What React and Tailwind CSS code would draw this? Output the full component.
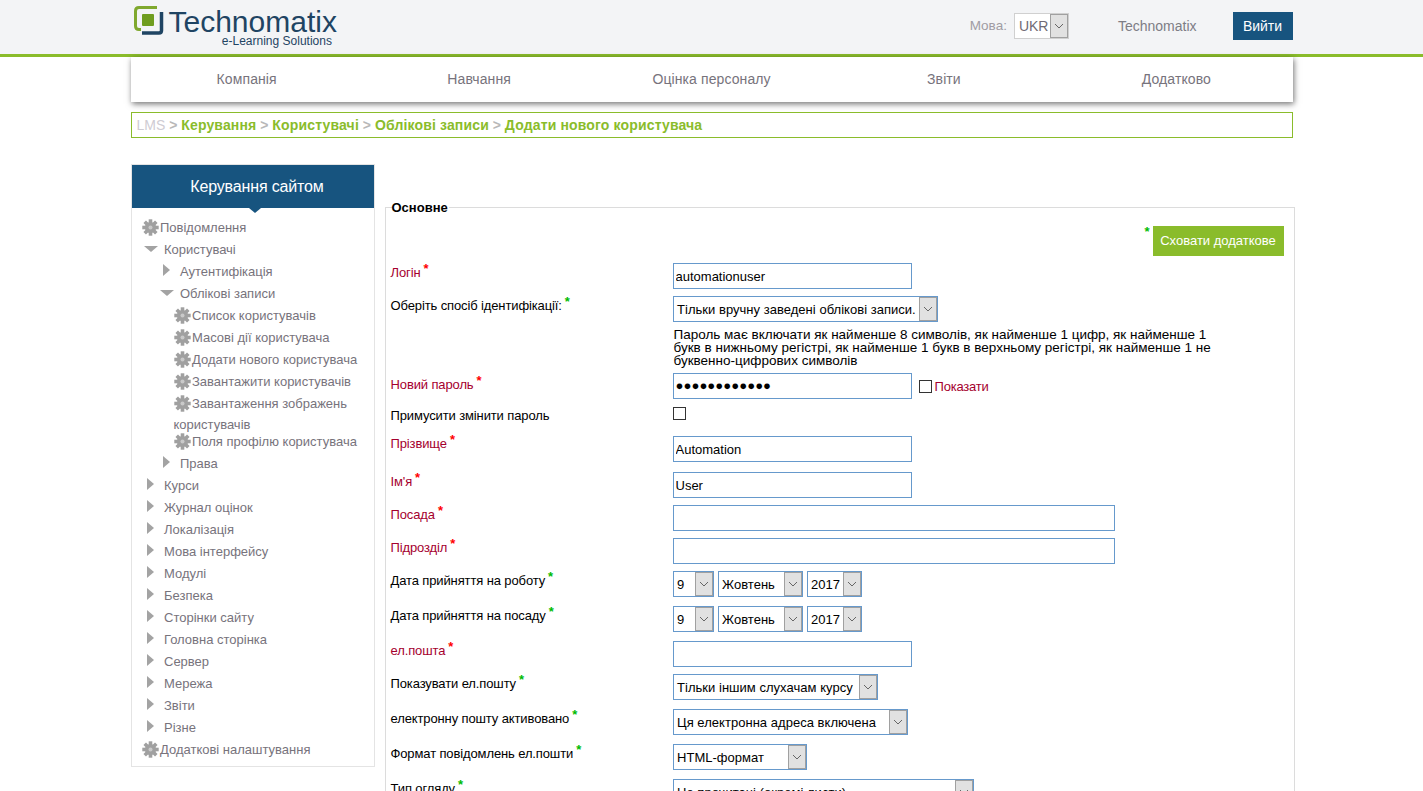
const nav = ["Компанія", "Навчання", "Оцінка персоналу", "Звіти", "Додатково"];

const tree = [
  { t: "Повідомлення", kind: "gear", pl: "pl-[10px]" },
  { t: "Користувачі", kind: "open", pl: "pl-[12px]" },
  { t: "Аутентифікація", kind: "closed", pl: "pl-[29px]" },
  { t: "Облікові записи", kind: "open", pl: "pl-[28px]" },
  { t: "Список користувачів", kind: "gear", pl: "pl-[42px]" },
  { t: "Масові дії користувача", kind: "gear", pl: "pl-[42px]" },
  { t: "Додати нового користувача", kind: "gear", pl: "pl-[42px]" },
  { t: "Завантажити користувачів", kind: "gear", pl: "pl-[42px]" },
  { t: "Завантаження зображень користувачів", kind: "gear", pl: "pl-[42px]", wrap: true },
  { t: "Поля профілю користувача", kind: "gear", pl: "pl-[42px]" },
  { t: "Права", kind: "closed", pl: "pl-[29px]" },
  { t: "Курси", kind: "closed", pl: "pl-[13px]" },
  { t: "Журнал оцінок", kind: "closed", pl: "pl-[13px]" },
  { t: "Локалізація", kind: "closed", pl: "pl-[13px]" },
  { t: "Мова інтерфейсу", kind: "closed", pl: "pl-[13px]" },
  { t: "Модулі", kind: "closed", pl: "pl-[13px]" },
  { t: "Безпека", kind: "closed", pl: "pl-[13px]" },
  { t: "Сторінки сайту", kind: "closed", pl: "pl-[13px]" },
  { t: "Головна сторінка", kind: "closed", pl: "pl-[13px]" },
  { t: "Сервер", kind: "closed", pl: "pl-[13px]" },
  { t: "Мережа", kind: "closed", pl: "pl-[13px]" },
  { t: "Звіти", kind: "closed", pl: "pl-[13px]" },
  { t: "Різне", kind: "closed", pl: "pl-[13px]" },
  { t: "Додаткові налаштування", kind: "gear", pl: "pl-[10px]" },
];

function Logo() {
  return (
    <svg width="30" height="30" viewBox="0 0 30 30" className="shrink-0">
      <path d="M23 2.5H5Q1.5 2.5 1.5 6V21Q1.5 24.5 5 24.5H7" fill="none" stroke="#7fa82e" strokeWidth="3" />
      <path d="M27.5 7V25.5Q27.5 28 25 28H8" fill="none" stroke="#1f4463" strokeWidth="3.5" />
      <rect x="8" y="9" width="12" height="12" rx="1" fill="#6f9d1f" />
    </svg>
  );
}

function Gear() {
  const teeth = [0, 45, 90, 135];
  return (
    <svg width="17" height="17" viewBox="0 0 17 17" className="mr-[1.5px] inline-block align-[-4px]">
      {teeth.map((a) => (
        <rect key={a} x="6.7" y="0.3" width="3.6" height="16.4" fill="#a0a0a0" transform={`rotate(${a} 8.5 8.5)`} />
      ))}
      <circle cx="8.5" cy="8.5" r="5.6" fill="#a0a0a0" />
      <circle cx="8.5" cy="8.5" r="2" fill="#c9c9c9" />
    </svg>
  );
}

function Chevron() {
  return (
    <svg width="10" height="6" viewBox="0 0 10 6">
      <path d="M1 1l4 4 4-4" fill="none" stroke="#666" strokeWidth="1" />
    </svg>
  );
}

function Select({ value, w }) {
  return (
    <div className={`flex h-[26px] ${w} items-stretch border border-[#6699cc] bg-white`}>
      <span className="min-w-0 flex-1 overflow-hidden whitespace-nowrap pl-[3.5px] text-[13px] leading-[25px] tracking-[0.03px] text-black">{value}</span>
      <span className="flex w-[18px] shrink-0 items-center justify-center border border-[#a0a0a0] bg-[#e1e1e1]">
        <Chevron />
      </span>
    </div>
  );
}

function TextBox({ value = "", w = "w-[239px]" }) {
  return (
    <input
      readOnly
      value={value}
      className={`block h-[26px] ${w} border border-[#6699cc] bg-white px-[2px] text-[13px] text-black outline-none`}
    />
  );
}

function Row({ label, star = "red", mt, labelClass = "", children }) {
  return (
    <div className={`flex ${mt}`}>
      <div className={`w-[287px] shrink-0 pl-[5px] text-[13px] leading-[20px] tracking-[-0.12px] ${labelClass}`}>
        <span className={star === "red" ? "text-[#a5002e]" : "text-black"}>{label}</span>
        <span className={`relative -top-[4px] ml-[3px] text-[13px] font-bold ${star === "red" ? "text-[#ff0000]" : "text-[#00bb00]"}`}>*</span>
      </div>
      <div className="flex gap-[4px]">{children}</div>
    </div>
  );
}

function DateRow({ label, mt }) {
  return (
    <Row label={label} star="green" mt={mt}>
      <Select value="9" w="w-[41px]" />
      <Select value="Жовтень" w="w-[85px]" />
      <Select value="2017" w="w-[55px]" />
    </Row>
  );
}

export default function App() {
  return (
    <div className="h-[791px] overflow-hidden bg-white font-['Liberation_Sans',Arial,sans-serif]">
      <header className="h-[57px] border-b-[3px] border-[#8abc2b] bg-[#f3f4f6]">
        <div className="mx-auto flex w-[1162px] items-start justify-between pl-[3px]">
          <div className="flex pt-[5px]">
            <Logo />
            <div className="ml-[5px] flex flex-col pt-[2px]">
              <span className="text-[30px] leading-[29px] text-[#1f4463]">Technomatix</span>
              <span className="self-end pr-[5px] text-[12px] leading-[10px] text-[#1f4463]">e-Learning Solutions</span>
            </div>
          </div>
          <div className="flex items-center pt-[12px]">
            <span className="text-[13.5px] text-[#a09ca4]">Мова:</span>
            <div className="ml-[7px] flex h-[26px] w-[55px] border border-[#d0d0d0] bg-white">
              <span className="flex-1 pl-[4px] text-[14px] leading-[24px] text-[#6f6a75]">UKR</span>
              <span className="flex w-[18px] items-center justify-center border border-[#a0a0a0] bg-[#e1e1e1]">
                <Chevron />
              </span>
            </div>
            <span className="ml-[49px] text-[14px] text-[#7d7d85]">Technomatix</span>
            <button className="ml-[36px] h-[28px] w-[60px] bg-[#17547f] text-[14px] text-white">Вийти</button>
          </div>
        </div>
      </header>

      <div className="mx-auto w-[1162px]">
        <nav className="flex h-[45px] items-center bg-white shadow-[1px_2px_6px_rgba(0,0,0,0.55)]">
          {nav.map((n) => (
            <div key={n} className="flex-1 text-center text-[14px] tracking-[0.1px] text-[#77737c]">
              {n}
            </div>
          ))}
        </nav>

        <div className="mt-[10px] h-[26px] border border-[#8abc2b] pl-[5px] text-[14px] leading-[24px]">
          <span className="text-[#cfccd3]">LMS</span>
          {["Керування", "Користувачі", "Облікові записи", "Додати нового користувача"].map((c) => (
            <span key={c}>
              <span className="font-bold text-[#b8b8b8]"> &gt; </span>
              <span className="font-bold tracking-[0.15px] text-[#8abc2b]">{c}</span>
            </span>
          ))}
        </div>

        <div className="mt-[26px] flex items-start">
          <aside className="w-[244px] shrink-0 border border-[#e4e4e4]">
            <div className="relative h-[43px] bg-[#17547f] pl-[9px] text-center text-[16px] leading-[43px] tracking-[-0.15px] text-white">
              Керування сайтом
              <span className="absolute left-[123px] top-full h-0 w-0 -translate-x-1/2 border-x-[6px] border-t-[5px] border-x-transparent border-t-[#17547f]" />
            </div>
            <ul className="pb-[5px] pt-[9px] text-[13px] leading-[22px] text-[#77737c]">
              {tree.map((i) => (
                <li key={i.t + i.pl} className={`${i.pl} ${i.wrap ? "h-[38px] pr-[10px] leading-[21px]" : ""}`}>
                  {i.kind === "gear" && <Gear />}
                  {i.kind === "open" && (
                    <span className="mr-[6.5px] inline-block h-0 w-0 align-[2px] border-x-[7px] border-t-[6px] border-x-transparent border-t-[#a3a3a3]" />
                  )}
                  {i.kind === "closed" && (
                    <span className="ml-[2px] mr-[10.5px] inline-block h-0 w-0 align-[0px] border-y-[6px] border-l-[7px] border-y-transparent border-l-[#a3a3a3]" />
                  )}
                  {i.t}
                </li>
              ))}
            </ul>
          </aside>

          <main className="ml-[10px] mt-[43px] h-[600px] w-[910px] shrink-0 border border-[#dcdcdc]">
            <div className="relative">
              <span className="absolute -top-[8px] left-[6px] bg-white pr-[1px] text-[13px] font-bold leading-[15px] text-black">Основне</span>
            </div>
            <div className="flex justify-end pr-[10px] pt-[18px]">
              <span className="relative -top-[1px] mr-[3px] text-[13px] font-bold leading-[14px] text-[#00bb00]">*</span>
              <button className="h-[30px] w-[131px] bg-[#8abc2b] text-[13px] text-white">Сховати додаткове</button>
            </div>

            <Row label="Логін" mt="mt-[7px]">
              <TextBox value="automationuser" />
            </Row>
            <Row label="Оберіть спосіб ідентифікації:" star="green" mt="mt-[7px]">
              <Select value="Тільки вручну заведені облікові записи." w="w-[265px]" />
            </Row>
            <div className="ml-[288px] mt-[6px] h-[39px] w-[546px] text-[13.5px] leading-[13px] text-black">
              Пароль має включати як найменше 8 символів, як найменше 1 цифр, як найменше 1 букв в нижньому регістрі, як найменше 1 букв в верхньому регістрі, як найменше 1 не буквенно-цифрових символів
            </div>
            <Row label="Новий пароль" mt="mt-[6px]" labelClass="pt-[2px]">
              <div className="flex h-[26px] w-[239px] items-center border border-[#6699cc] px-[2px] text-[13.2px] text-black">
                ●●●●●●●●●●●●
              </div>
              <div className="ml-[3px] flex items-start">
                <span className="mt-[7px] h-[13px] w-[13px] border border-[#333]" />
                <span className="ml-[3px] mt-[4px] text-[13px] leading-[20px] tracking-[-0.2px] text-[#a5002e]">Показати</span>
              </div>
            </Row>
            <div className="mt-[8px] flex h-[13px]">
              <div className="w-[287px] pl-[5px] text-[13px] leading-[18px] tracking-[-0.12px] text-black">Примусити змінити пароль</div>
              <span className="h-[13px] w-[13px] border border-[#333]" />
            </div>
            <Row label="Прізвище" mt="mt-[16px]" labelClass="-mt-[2px]">
              <TextBox value="Automation" />
            </Row>
            <Row label="Ім'я" mt="mt-[10px]">
              <TextBox value="User" />
            </Row>
            <Row label="Посада" mt="mt-[7px]">
              <TextBox w="w-[442px]" />
            </Row>
            <Row label="Підрозділ" mt="mt-[7px]">
              <TextBox w="w-[442px]" />
            </Row>
            <DateRow label="Дата прийняття на роботу" mt="mt-[7px]" />
            <DateRow label="Дата прийняття на посаду" mt="mt-[9px]" />
            <Row label="ел.пошта" mt="mt-[9px]">
              <TextBox />
            </Row>
            <Row label="Показувати ел.пошту" star="green" mt="mt-[7px]">
              <Select value="Тільки іншим слухачам курсу" w="w-[205px]" />
            </Row>
            <Row label="електронну пошту активовано" star="green" mt="mt-[9px]">
              <Select value="Ця електронна адреса включена" w="w-[235px]" />
            </Row>
            <Row label="Формат повідомлень ел.пошти" star="green" mt="mt-[9px]">
              <Select value="HTML-формат" w="w-[134px]" />
            </Row>
            <Row label="Тип огляду" star="green" mt="mt-[9px]">
              <Select value="Не прочитані (окремі листи)" w="w-[301px]" />
            </Row>
          </main>
        </div>
      </div>
    </div>
  );
}
